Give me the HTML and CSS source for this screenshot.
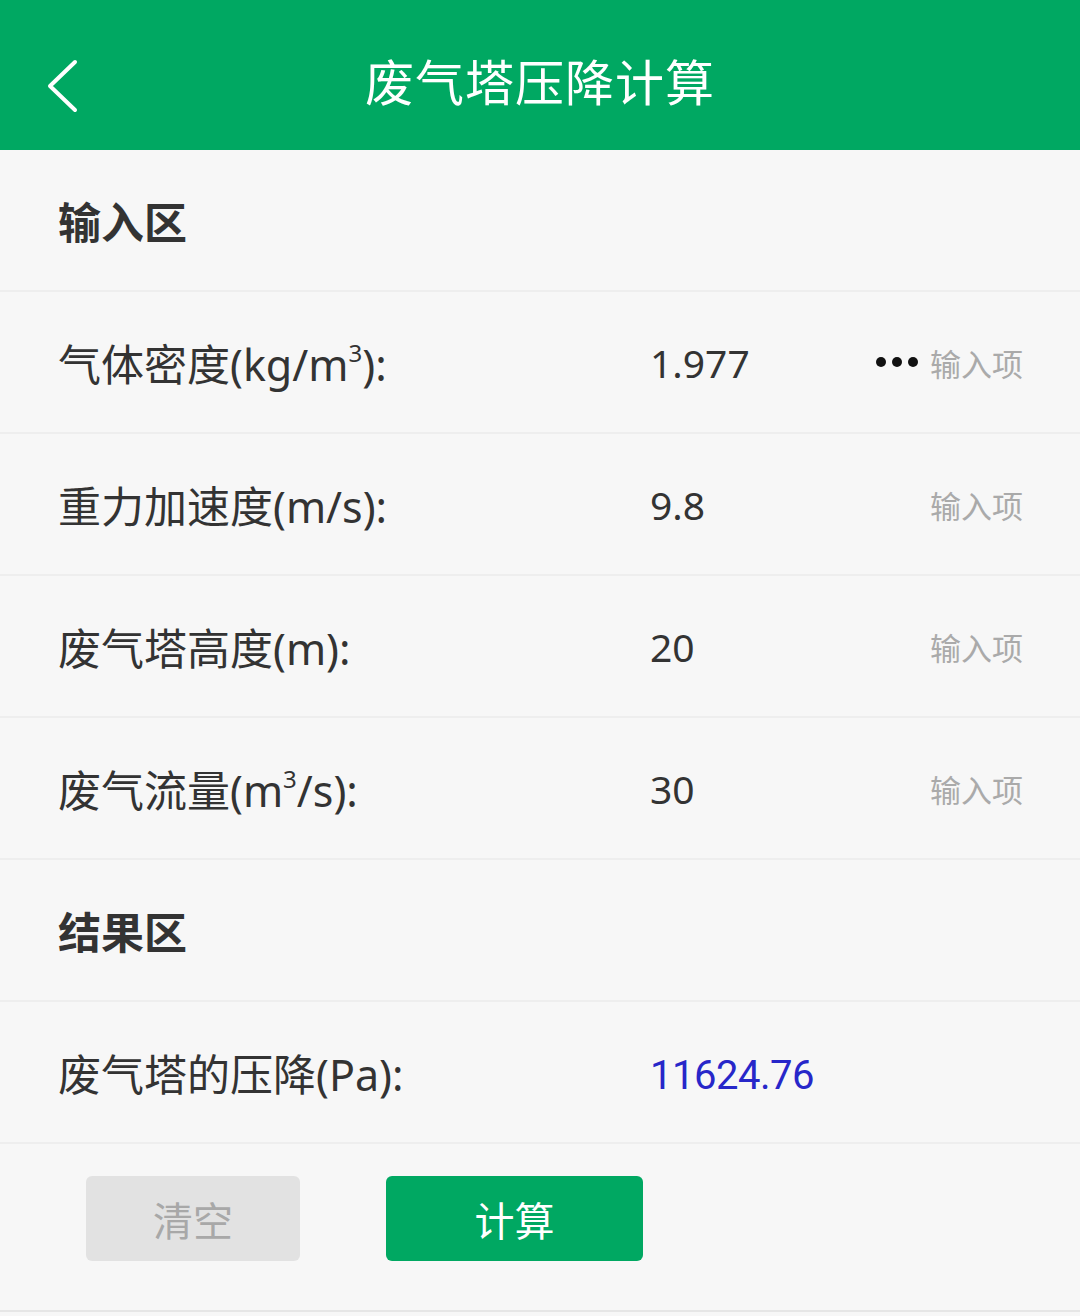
FILE: index.html
```
<!DOCTYPE html>
<html>
<head>
  <meta charset="utf-8">
  <link rel="stylesheet" href="styles.css">
</head>
<body>
  <header class="topbar">
    <svg class="back" width="34" height="54" viewBox="0 0 34 54">
      <path d="M30 3 L5 27 L30 51" fill="none" stroke="#fff" stroke-width="4" stroke-linecap="round" stroke-linejoin="round"/>
    </svg>
    <h1 class="title">废气塔压降计算</h1>
  </header>

  <main>
    <div class="section-head">输入区</div>

    <div class="row">
      <span class="label">气体密度(kg/m<sup>3</sup>):</span>
      <span class="value">1.977</span>
      <span class="hint"><span class="dots"><i></i><i></i><i></i></span>输入项</span>
    </div>
    <div class="row">
      <span class="label">重力加速度(m/s):</span>
      <span class="value">9.8</span>
      <span class="hint">输入项</span>
    </div>
    <div class="row">
      <span class="label">废气塔高度(m):</span>
      <span class="value">20</span>
      <span class="hint">输入项</span>
    </div>
    <div class="row">
      <span class="label">废气流量(m<sup>3</sup>/s):</span>
      <span class="value">30</span>
      <span class="hint">输入项</span>
    </div>

    <div class="section-head">结果区</div>

    <div class="row">
      <span class="label">废气塔的压降(Pa):</span>
      <span class="value result">11624.76</span>
    </div>

    <div class="actions">
      <button class="btn btn-clear">清空</button>
      <button class="btn btn-calc">计算</button>
    </div>
  </main>
</body>
</html>
```

FILE: styles.css
```
body {
  margin: 0;
  background-color: #f7f7f7;
  font-family: "Noto Sans", "Noto Sans CJK SC", sans-serif;
  color: #333;
}

.topbar {
  height: 150px;
  background-color: #00a862;
  display: flex;
  align-items: center;
  justify-content: center;
  position: relative;
}

.back {
  position: absolute;
  left: 45px;
  top: 59px;
}

.title {
  margin: 8px 0 0;
  color: #fff;
  font-size: 49px;
  font-weight: 400;
  letter-spacing: 1px;
}

.section-head {
  height: 142px;
  display: flex;
  align-items: center;
  padding-left: 58px;
  font-size: 43px;
  font-weight: 700;
  color: #333;
  border-bottom: 2px solid #eeeeee;
  box-sizing: border-box;
}

.row {
  height: 142px;
  display: flex;
  align-items: center;
  padding: 0 57px 0 58px;
  border-bottom: 2px solid #eeeeee;
  box-sizing: border-box;
  font-size: 43px;
}

.label {
  width: 592px;
  flex-shrink: 0;
  color: #333;
}

.label sup {
  font-size: 24px;
  vertical-align: 19px;
  line-height: 0;
}

.value {
  flex: 1;
  color: #333;
  font-size: 39px;
}

.value.result {
  color: #2727c9;
  font-family: Roboto, "Noto Sans", sans-serif;
  font-size: 40px;
  letter-spacing: -0.5px;
  padding-top: 6px;
}

.hint {
  font-size: 31px;
  color: #aaaaaa;
  display: flex;
  align-items: center;
}

.dots {
  display: flex;
  gap: 6px;
  margin-right: 12px;
}

.dots i {
  width: 10px;
  height: 10px;
  border-radius: 50%;
  background-color: #111;
}

.actions {
  display: flex;
  padding: 32px 0 0 86px;
  gap: 86px;
  height: 168px;
  box-sizing: border-box;
  border-bottom: 2px solid #e6e6e6;
}

.btn {
  height: 85px;
  border: none;
  border-radius: 6px;
  font-family: "Noto Sans CJK SC", sans-serif;
  font-size: 40px;
}

.btn-clear {
  width: 214px;
  background-color: #e2e2e2;
  color: #a8a8a8;
}

.btn-calc {
  width: 257px;
  background-color: #00a862;
  color: #fff;
}
```
